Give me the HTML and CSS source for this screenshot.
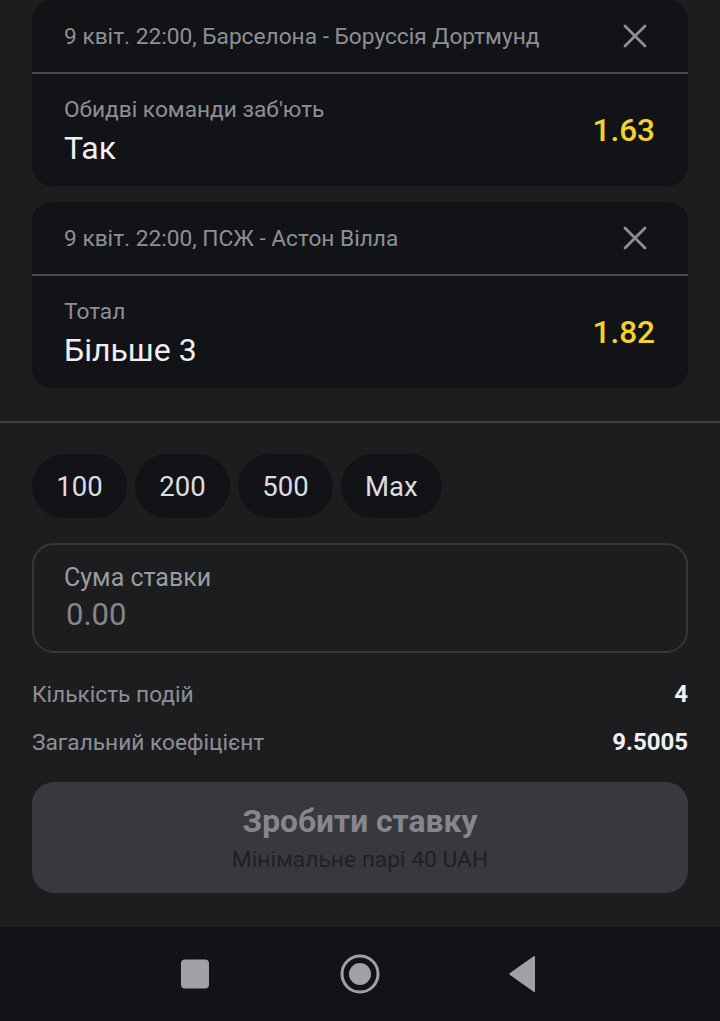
FILE: index.html
```html
<!DOCTYPE html>
<html lang="uk">

<head>
    <meta charset="UTF-8">
    <meta name="viewport" content="width=device-width, initial-scale=1.0">
    <title>Купон</title>
    <link rel="stylesheet" href="styles.css">
</head>

<body>
    <div class="screen">
        <div class="slip">
            <div class="bet-card">
                <div class="bet-head">
                    <span class="bet-event">9 квіт. 22:00, Барселона - Боруссія Дортмунд</span>
                    <svg class="bet-close" width="24" height="24" viewBox="0 0 24 24">
                        <path d="M2 2 L22 22 M22 2 L2 22" stroke="#8e8f94" stroke-width="2.8" stroke-linecap="round" />
                    </svg>
                </div>
                <div class="bet-body">
                    <div class="bet-info">
                        <span class="bet-market">Обидві команди заб'ють</span>
                        <span class="bet-pick">Так</span>
                    </div>
                    <span class="bet-odds">1.63</span>
                </div>
            </div>

            <div class="bet-card">
                <div class="bet-head">
                    <span class="bet-event">9 квіт. 22:00, ПСЖ - Астон Вілла</span>
                    <svg class="bet-close" width="24" height="24" viewBox="0 0 24 24">
                        <path d="M2 2 L22 22 M22 2 L2 22" stroke="#8e8f94" stroke-width="2.8" stroke-linecap="round" />
                    </svg>
                </div>
                <div class="bet-body">
                    <div class="bet-info">
                        <span class="bet-market">Тотал</span>
                        <span class="bet-pick">Більше 3</span>
                    </div>
                    <span class="bet-odds">1.82</span>
                </div>
            </div>
        </div>

        <div class="stake">
            <div class="chips">
                <button class="chip">100</button>
                <button class="chip">200</button>
                <button class="chip">500</button>
                <button class="chip">Max</button>
            </div>

            <label class="amount">
                <span class="amount-label">Сума ставки</span>
                <input type="text" class="amount-input" placeholder="0.00">
            </label>

            <div class="summary">
                <div class="summary-row">
                    <span>Кількість подій</span>
                    <b>4</b>
                </div>
                <div class="summary-row">
                    <span>Загальний коефіцієнт</span>
                    <b>9.5005</b>
                </div>
            </div>

            <button class="place-bet" disabled>
                <span class="place-title">Зробити ставку</span>
                <span class="place-note">Мінімальне парі 40 UAH</span>
            </button>
        </div>
    </div>

    <nav class="navbar">
        <svg width="30" height="30" viewBox="0 0 30 30">
            <rect x="1" y="0.5" width="28" height="29" rx="4" fill="#a0a0a5" />
        </svg>
        <svg width="40" height="40" viewBox="0 0 40 40">
            <circle cx="20" cy="20" r="18" fill="none" stroke="#a0a0a5" stroke-width="3" />
            <circle cx="20" cy="20" r="11" fill="#a0a0a5" />
        </svg>
        <svg width="30" height="40" viewBox="0 0 30 40">
            <path d="M27 2 Q28 1.5 28 3 L28 37 Q28 38.5 27 38 L3 21 Q1.5 20 3 19 Z" fill="#a0a0a5" />
        </svg>
    </nav>
</body>

</html>
```

FILE: styles.css
```css
* {
    margin: 0;
    padding: 0;
    box-sizing: border-box;
    font-family: Roboto, 'Noto Sans', sans-serif;
}
body {
    background-color: #1c1d1f;
    width: 720px;
}
.screen {
    height: 927px;
}
.slip {
    padding: 0 32px;
    display: flex;
    flex-direction: column;
    gap: 16px;
    padding-bottom: 33px;
    border-bottom: 2px solid #3e3f43;
}
.bet-card {
    background: #121317;
    border-radius: 20px;
}
.bet-head {
    height: 74px;
    display: flex;
    align-items: center;
    justify-content: space-between;
    padding: 0 41px 0 32px;
    border-bottom: 2px solid #48494d;
}
.bet-event {
    font-size: 22.7px;
    color: #8e8f94;
}
.bet-body {
    height: 112px;
    display: flex;
    align-items: center;
    justify-content: space-between;
    padding: 0 33px 0 32px;
}
.bet-info {
    display: flex;
    flex-direction: column;
    gap: 6px;
    padding-top: 2px;
}
.bet-market {
    font-size: 22.7px;
    color: #8e8f94;
}
.bet-pick {
    font-size: 32px;
    color: #f0f0f2;
}
.bet-odds {
    font-size: 31.5px;
    font-weight: 500;
    color: #f5d22b;
}
.stake {
    padding: 31px 32px 0;
}
.chips {
    display: flex;
    gap: 8px;
}
.chip {
    height: 64px;
    min-width: 95px;
    padding: 0 24px;
    border: none;
    border-radius: 32px;
    background: #121317;
    color: #dddde0;
    font-size: 27.5px;
}
.amount {
    margin-top: 25px;
    height: 110px;
    border: 2px solid #36373c;
    border-radius: 22px;
    display: flex;
    flex-direction: column;
    justify-content: center;
    padding: 0 30px;
}
.amount-label {
    font-size: 25px;
    color: #9b9ca0;
}
.amount-input {
    margin-top: 4px;
    background: none;
    border: none;
    outline: none;
    font-size: 31px;
    color: #f0f0f2;
    padding-left: 2px;
}
.amount-input::placeholder {
    color: #85868a;
}
.summary {
    margin-top: 27px;
    display: flex;
    flex-direction: column;
    gap: 20px;
}
.summary-row {
    display: flex;
    justify-content: space-between;
    align-items: center;
    height: 28px;
    font-size: 22.7px;
    color: #8e8f94;
}
.summary-row b {
    font-size: 24px;
    font-weight: 700;
    color: #f0f0f2;
}
.place-bet {
    margin-top: 26px;
    width: 100%;
    height: 111px;
    border: none;
    border-radius: 22px;
    background: #38393e;
    display: flex;
    flex-direction: column;
    align-items: center;
    justify-content: center;
    gap: 6px;
}
.place-title {
    font-size: 31.8px;
    font-weight: 700;
    color: #86878d;
}
.place-note {
    font-size: 22.8px;
    color: #202124;
}
.navbar {
    height: 94px;
    background: #121317;
    display: flex;
    align-items: center;
    justify-content: center;
    gap: 130px;
    padding-right: 4px;
}
.navbar svg:last-child {
    margin-left: -3px;
}
```
